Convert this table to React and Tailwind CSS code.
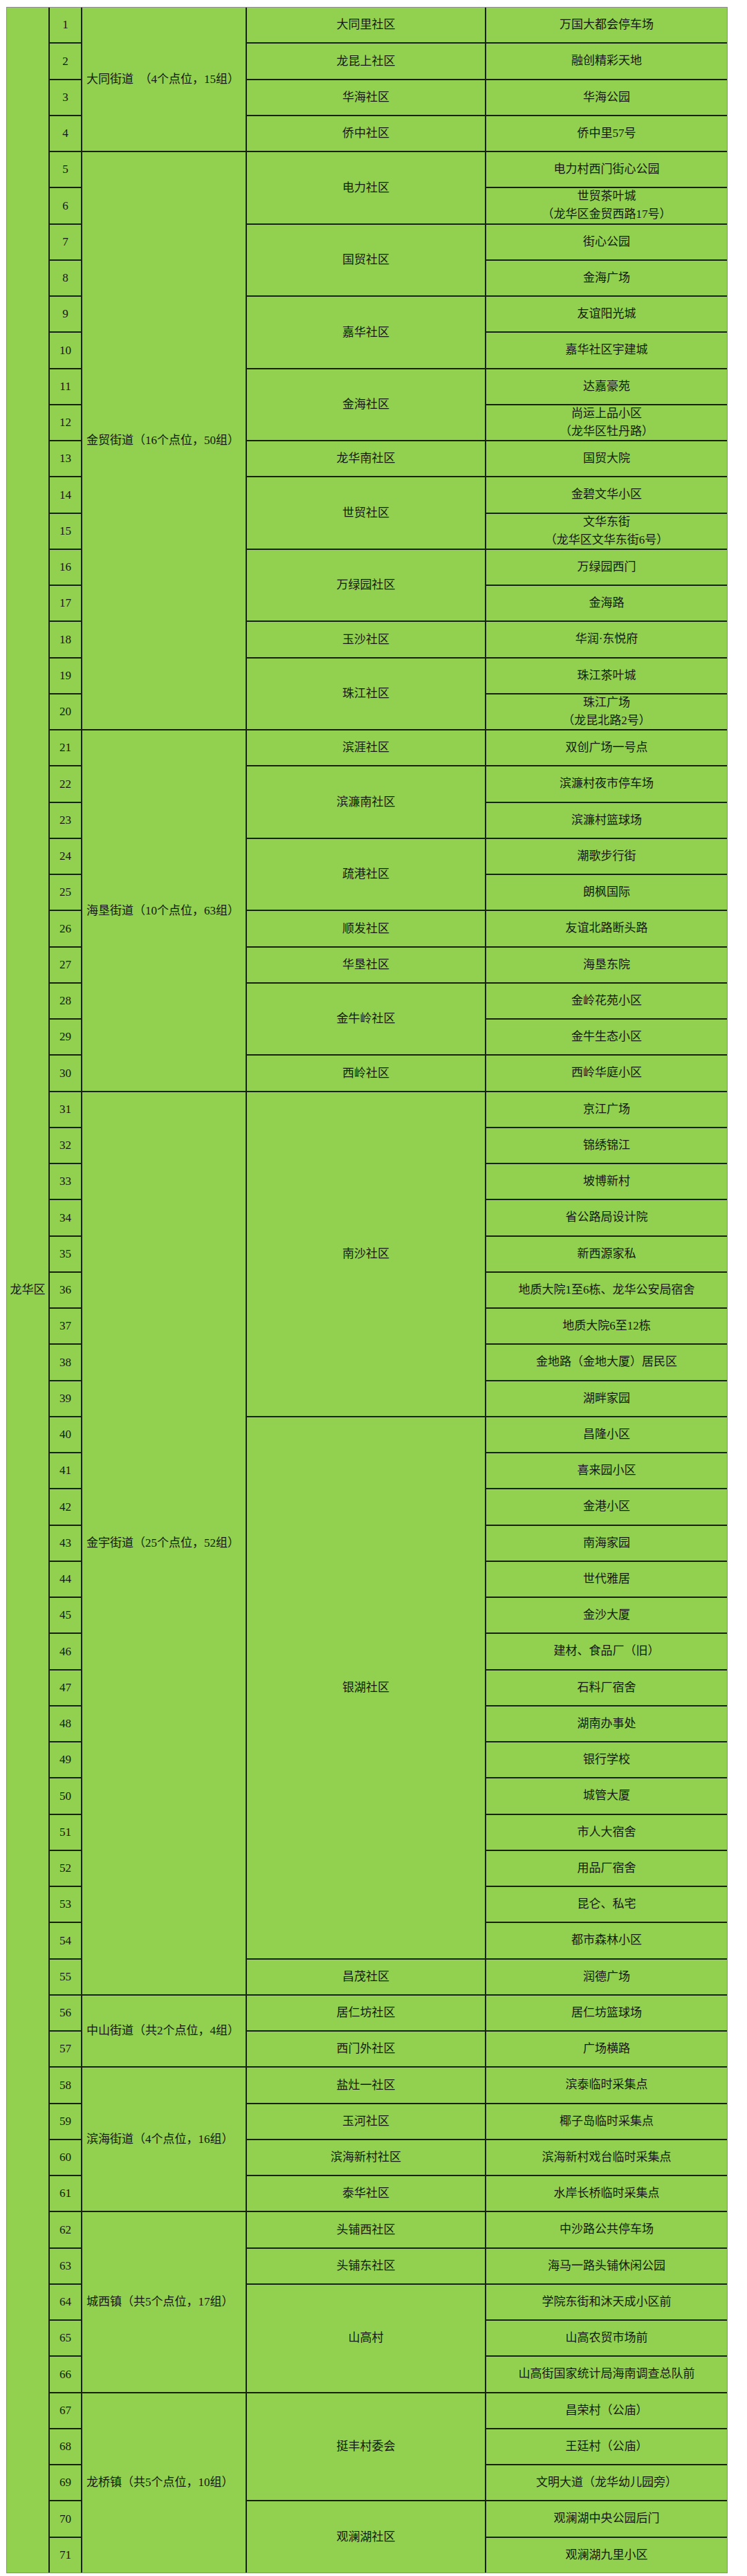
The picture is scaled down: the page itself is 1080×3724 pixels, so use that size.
import React from 'react';

const SECTIONS = [
  {
    name: '大同街道\u00a0\u00a0（4个点位，15组）',
    communities: [
      ['大同里社区', ['万国大都会停车场']],
      ['龙昆上社区', ['融创精彩天地']],
      ['华海社区', ['华海公园']],
      ['侨中社区', ['侨中里57号']],
    ],
  },
  {
    name: '金贸街道（16个点位，50组）',
    communities: [
      ['电力社区', ['电力村西门街心公园', ['世贸茶叶城', '（龙华区金贸西路17号）']]],
      ['国贸社区', ['街心公园', '金海广场']],
      ['嘉华社区', ['友谊阳光城', '嘉华社区宇建城']],
      ['金海社区', ['达嘉豪苑', ['尚运上品小区', '（龙华区牡丹路）']]],
      ['龙华南社区', ['国贸大院']],
      ['世贸社区', ['金碧文华小区', ['文华东街', '（龙华区文华东街6号）']]],
      ['万绿园社区', ['万绿园西门', '金海路']],
      ['玉沙社区', ['华润·东悦府']],
      ['珠江社区', ['珠江茶叶城', ['珠江广场', '（龙昆北路2号）']]],
    ],
  },
  {
    name: '海垦街道（10个点位，63组）',
    communities: [
      ['滨涯社区', ['双创广场一号点']],
      ['滨濂南社区', ['滨濂村夜市停车场', '滨濂村篮球场']],
      ['疏港社区', ['潮歌步行街', '朗枫国际']],
      ['顺发社区', ['友谊北路断头路']],
      ['华垦社区', ['海垦东院']],
      ['金牛岭社区', ['金岭花苑小区', '金牛生态小区']],
      ['西岭社区', ['西岭华庭小区']],
    ],
  },
  {
    name: '金宇街道（25个点位，52组）',
    communities: [
      ['南沙社区', [
        '京江广场', '锦绣锦江', '坡博新村', '省公路局设计院', '新西源家私',
        '地质大院1至6栋、龙华公安局宿舍', '地质大院6至12栋', '金地路（金地大厦）居民区', '湖畔家园',
      ]],
      ['银湖社区', [
        '昌隆小区', '喜来园小区', '金港小区', '南海家园', '世代雅居', '金沙大厦',
        '建材、食品厂（旧）', '石料厂宿舍', '湖南办事处', '银行学校', '城管大厦',
        '市人大宿舍', '用品厂宿舍', '昆仑、私宅', '都市森林小区',
      ]],
      ['昌茂社区', ['润德广场']],
    ],
  },
  {
    name: '中山街道（共2个点位，4组）',
    communities: [
      ['居仁坊社区', ['居仁坊篮球场']],
      ['西门外社区', ['广场横路']],
    ],
  },
  {
    name: '滨海街道（4个点位，16组）',
    communities: [
      ['盐灶一社区', ['滨泰临时采集点']],
      ['玉河社区', ['椰子岛临时采集点']],
      ['滨海新村社区', ['滨海新村戏台临时采集点']],
      ['泰华社区', ['水岸长桥临时采集点']],
    ],
  },
  {
    name: '城西镇（共5个点位，17组）',
    communities: [
      ['头铺西社区', ['中沙路公共停车场']],
      ['头铺东社区', ['海马一路头铺休闲公园']],
      ['山高村', ['学院东街和沐天成小区前', '山高农贸市场前', '山高街国家统计局海南调查总队前']],
    ],
  },
  {
    name: '龙桥镇（共5个点位，10组）',
    communities: [
      ['挺丰村委会', ['昌荣村（公庙）', '王廷村（公庙）', '文明大道（龙华幼儿园旁）']],
      ['观澜湖社区', ['观澜湖中央公园后门', '观澜湖九里小区']],
    ],
  },
];

const cell = 'bg-[#92d050] flex items-center';

export default function App() {
  let n = 0;

  return (
    <div className="bg-white min-h-screen pt-[10px] pl-[9px] text-[17px] text-[#141a10] font-['Liberation_Serif','Noto_Sans_CJK_SC',serif]">
      <div className="w-[1043px] flex gap-[2px] bg-[#18230f] border border-[#8c8c8c]">
        <div className={`${cell} w-[60px] justify-center`}>龙华区</div>

        <div className="flex-1 flex flex-col gap-[2px]">
          {SECTIONS.map(sec => {
            const count = sec.communities.reduce((s, c) => s + c[1].length, 0);
            const nums = Array.from({ length: count }, () => ++n);
            return (
              <div key={sec.name} className="flex gap-[2px]">
                <div className="w-[45px] flex flex-col gap-[2px]">
                  {nums.map(k => (
                    <div key={k} className={`${cell} h-[50.25px] justify-center`}>{k}</div>
                  ))}
                </div>
                <div className={`${cell} w-[236px] pl-[6px] whitespace-nowrap`}>{sec.name}</div>
                <div className="flex-1 flex flex-col gap-[2px]">
                  {sec.communities.map(([name, points]) => (
                    <div key={name} className="flex gap-[2px]">
                      <div className={`${cell} w-[344px] justify-center`}>{name}</div>
                      <div className="flex-1 flex flex-col gap-[2px]">
                        {points.map((p, i) => (
                          <div key={i} className={`${cell} h-[50.25px] justify-center text-center leading-[26px]`}>
                            {Array.isArray(p)
                              ? <div>{p[0]}<br />{p[1]}</div>
                              : p}
                          </div>
                        ))}
                      </div>
                    </div>
                  ))}
                </div>
              </div>
            );
          })}
        </div>
      </div>
    </div>
  );
}
